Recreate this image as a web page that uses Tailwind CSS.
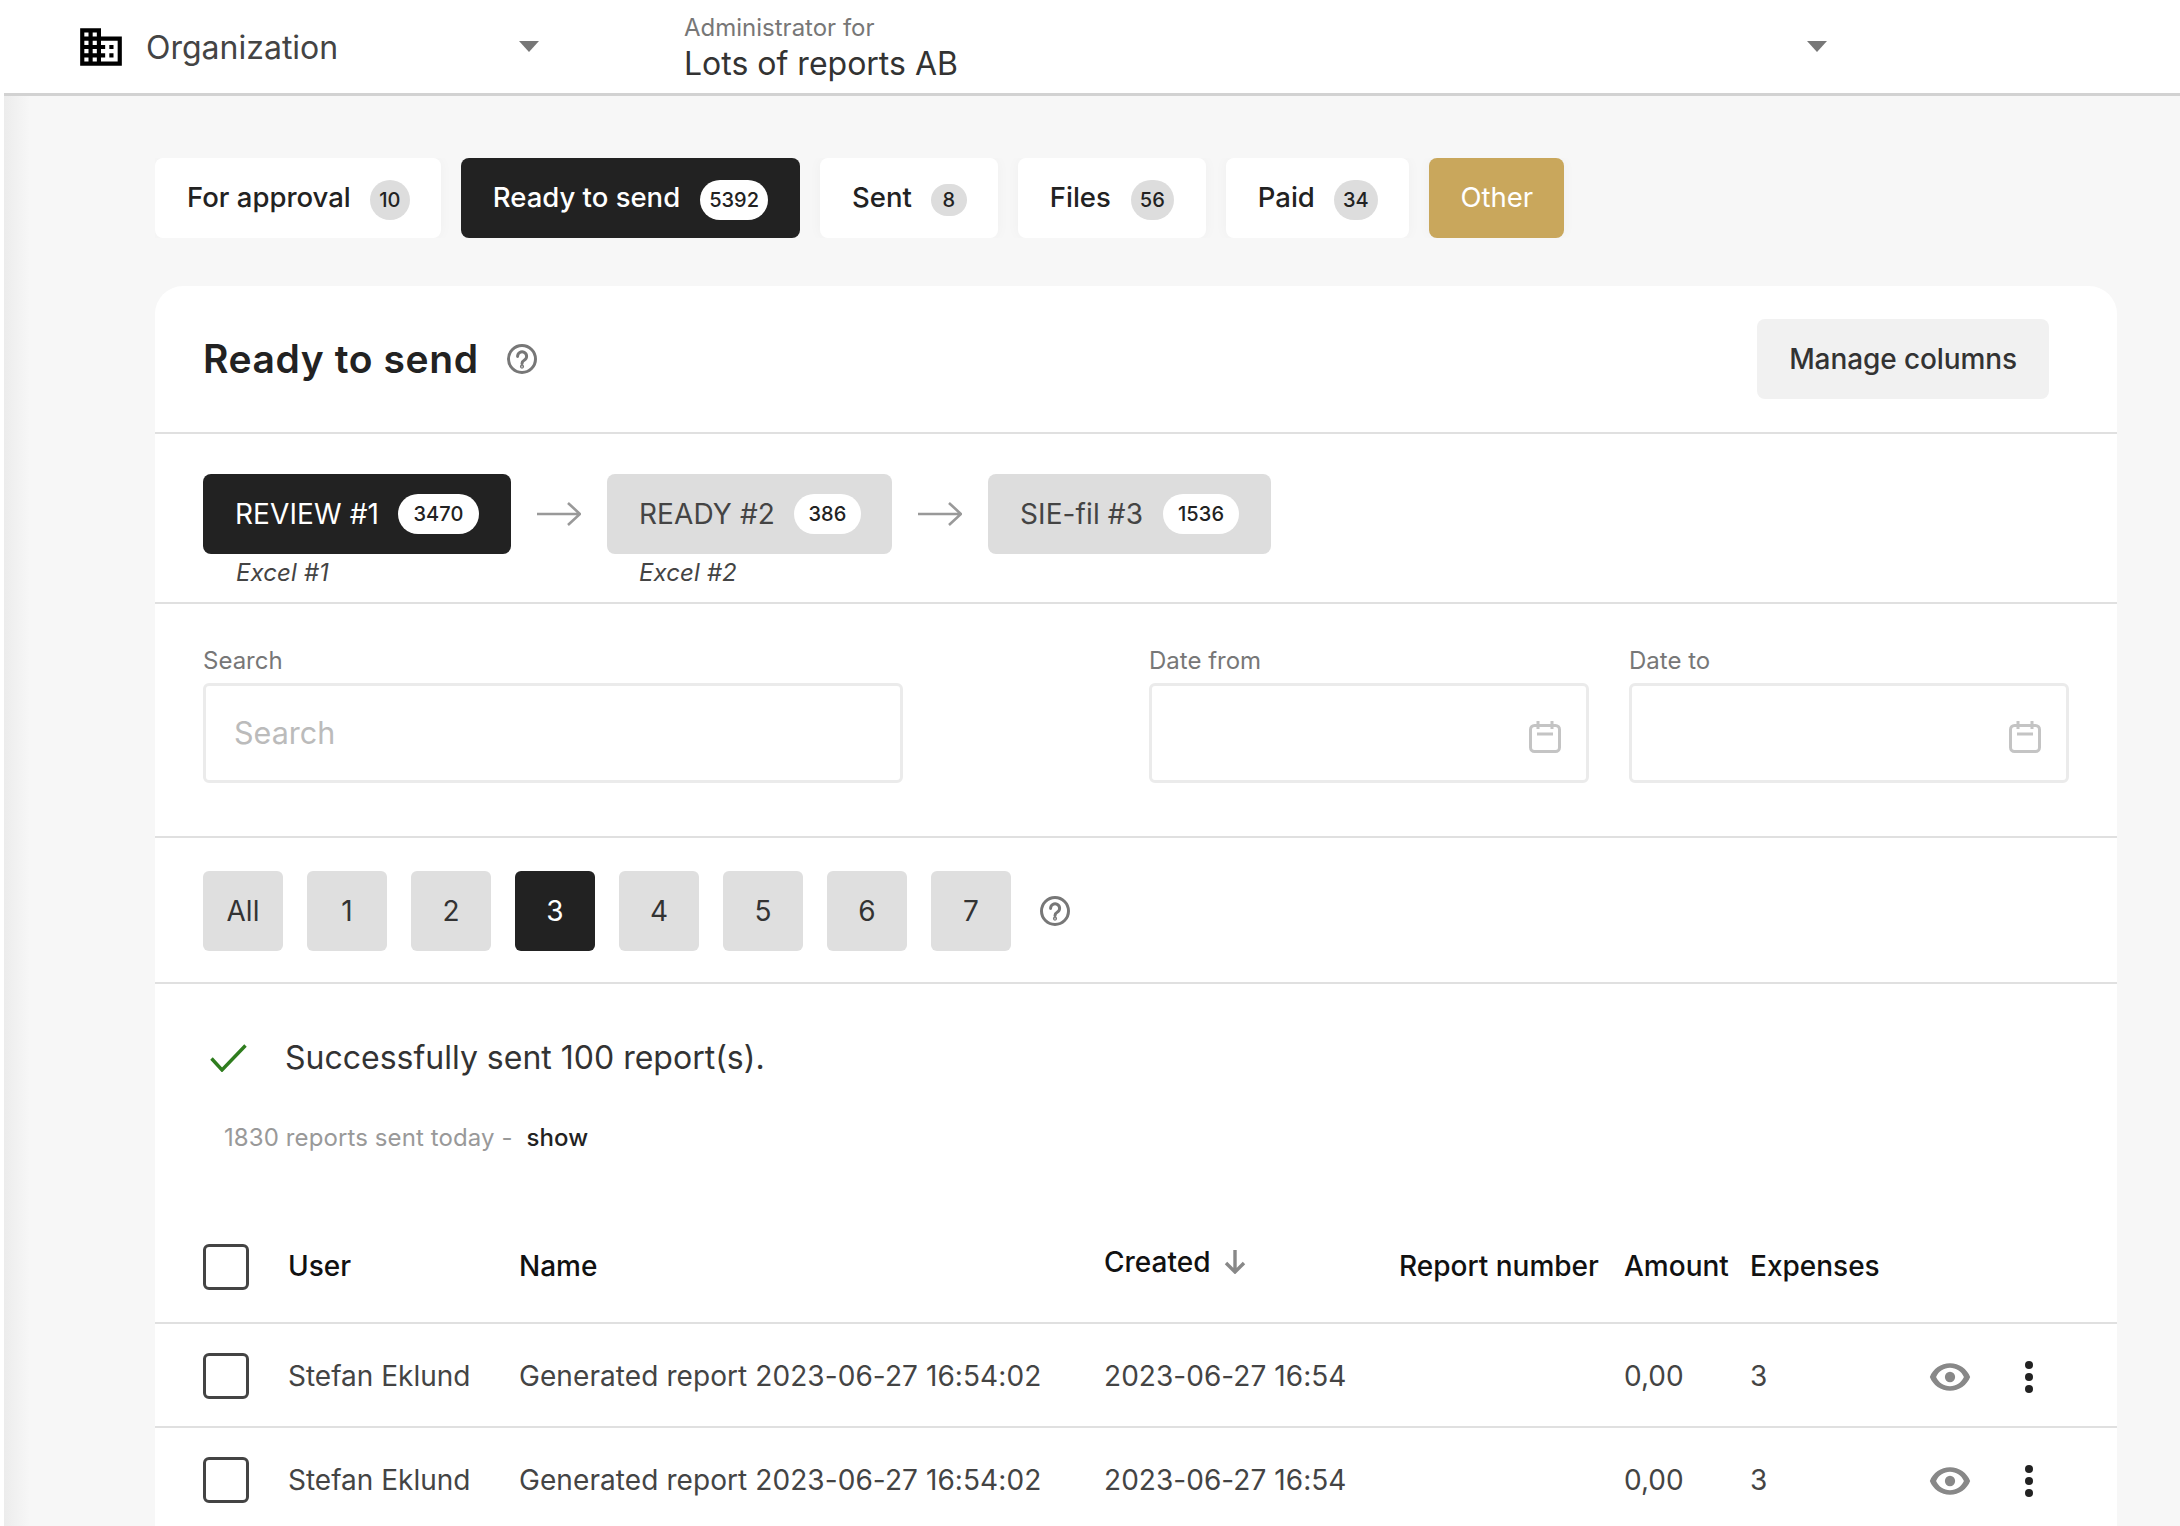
<!doctype html>
<html lang="en">
<head>
<meta charset="utf-8">
<title>Ready to send</title>
<script src="https://cdn.jsdelivr.net/npm/@tailwindcss/browser@4"></script>
</head>
<body class="m-0 bg-white">
<div class="w-[2180px] h-[1526px] overflow-hidden flex font-['Inter','Liberation_Sans',sans-serif] text-[28px] text-[#222]">
  <div class="w-[4px] shrink-0 bg-white"></div>
  <div class="w-[2176px] shrink-0 bg-[linear-gradient(90deg,#ececec,#f7f7f7_26px)]">
    <header class="h-[96px] bg-white border-b-[3px] border-[#d2d2d2] flex items-start">
      <div class="w-[463px] ml-[72px] h-[93px] flex items-center">
        <svg class="w-[50px] h-[50px] text-black" viewBox="0 0 24 24" fill="currentColor" aria-hidden="true"><path d="M12 7V3H2v18h20V7H12zM6 19H4v-2h2v2zm0-4H4v-2h2v2zm0-4H4V9h2v2zm0-4H4V5h2v2zm4 12H8v-2h2v2zm0-4H8v-2h2v2zm0-4H8V9h2v2zm0-4H8V5h2v2zm10 12h-8v-2h2v-2h-2v-2h2v-2h-2V9h8v10zm-2-8h-2v2h2v-2zm0 4h-2v2h2v-2z"/></svg>
        <span class="ml-[20px] mt-[3px] text-[32px] text-[#444] flex-1">Organization</span>
        <span class="w-0 h-0 border-x-[10px] border-x-transparent border-t-[11px] border-t-[#777]"></span>
      </div>
      <div class="w-[1143px] ml-[145px] h-[93px] flex items-center justify-between">
        <div class="flex flex-col pt-[3px]">
          <span class="text-[24px] leading-[30px] text-[#777]">Administrator for</span>
          <span class="text-[32px] leading-[40px] mt-[1px] text-[#333]">Lots of reports AB</span>
        </div>
        <span class="w-0 h-0 border-x-[10px] border-x-transparent border-t-[11px] border-t-[#777]"></span>
      </div>
    </header>

    <main class="pl-[151px]">
      <nav class="mt-[62px] h-[80px] w-[1450px] flex gap-[20px] overflow-hidden font-medium text-[27.5px]">
        <a class="h-[80px] rounded-[8px] bg-white shadow-[0_0_14px_rgba(0,0,0,0.035)] pl-[32px] pr-[31px] flex items-center gap-[19px]">For approval <span class="h-[40px] px-[9px] min-w-[40px] mt-[3px] rounded-full bg-[#ddd] flex items-center justify-center text-[20px]">10</span></a>
        <a class="h-[80px] rounded-[8px] bg-[#222] text-white pl-[32px] pr-[32px] flex items-center gap-[20px]">Ready to send <span class="h-[40px] px-[9px] mt-[3px] rounded-full bg-white text-[#222] flex items-center justify-center text-[20px]">5392</span></a>
        <a class="h-[80px] rounded-[8px] bg-white shadow-[0_0_14px_rgba(0,0,0,0.035)] pl-[32px] pr-[31px] flex items-center gap-[19px]">Sent <span class="h-[32px] w-[36px] mt-[3px] rounded-full bg-[#ddd] flex items-center justify-center text-[20px]">8</span></a>
        <a class="h-[80px] rounded-[8px] bg-white shadow-[0_0_14px_rgba(0,0,0,0.035)] pl-[32px] pr-[32px] flex items-center gap-[20px]">Files <span class="h-[40px] px-[9px] mt-[3px] rounded-full bg-[#ddd] flex items-center justify-center text-[20px]">56</span></a>
        <a class="h-[80px] rounded-[8px] bg-white shadow-[0_0_14px_rgba(0,0,0,0.035)] pl-[32px] pr-[31px] flex items-center gap-[19px]">Paid <span class="h-[40px] px-[9px] mt-[3px] rounded-full bg-[#ddd] flex items-center justify-center text-[20px]">34</span></a>
        <a class="h-[80px] rounded-[8px] bg-[#c9a75c] text-white pl-[32px] pr-[31px] shadow-[0_0_14px_rgba(0,0,0,0.035)] flex items-center font-normal">Other</a>
      </nav>

      <section class="mt-[48px] w-[1962px] bg-white rounded-t-[28px]">
        <div class="h-[148px] border-b-[2px] border-[#e0e0e0] pl-[48px] pr-[68px] flex items-center justify-between">
          <div class="flex items-center gap-[28px]">
            <h1 class="text-[39px] font-semibold m-0 tracking-[0.6px]">Ready to send</h1>
            <svg class="w-[30px] h-[30px] text-[#777]" viewBox="0 0 30 30" fill="none" stroke="currentColor" stroke-width="3" stroke-linecap="round" aria-hidden="true"><circle cx="15" cy="15" r="13.5"/><path d="M10.6 12.4a4.5 4.5 0 1 1 6.9 3.7c-1.6 1-2.5 1.8-2.5 3.3"/><circle cx="15" cy="22.6" r="0.6" fill="currentColor"/></svg>
          </div>
          <button class="h-[80px] px-[32px] rounded-[8px] bg-[#f1f1f1] font-medium text-[#333] tracking-[-0.1px]">Manage columns</button>
        </div>

        <div class="h-[170px] border-b-[2px] border-[#e0e0e0] pl-[48px] pt-[40px] flex items-start tracking-[0.1px]">
          <div class="flex flex-col">
            <div class="h-[80px] w-[308px] rounded-[8px] bg-[#222] text-white pl-[32px] flex items-center gap-[19px]"><span>REVIEW #1</span><span class="h-[40px] w-[81px] rounded-full bg-white text-[#222] flex items-center justify-center text-[20px] font-medium">3470</span></div>
            <i class="pl-[33px] mt-[4px] text-[24px] leading-[30px] text-[#444]">Excel #1</i>
          </div>
          <svg class="w-[44px] h-[24px] mx-[26px] mt-[28px] text-[#999]" viewBox="0 0 44 24" fill="none" stroke="currentColor" stroke-width="2.6" aria-hidden="true"><path d="M0 12H43M31 1l12 11-12 11"/></svg>
          <div class="flex flex-col">
            <div class="h-[80px] w-[285px] rounded-[8px] bg-[#ddd] text-[#444] pl-[32px] flex items-center gap-[19px]"><span>READY #2</span><span class="h-[40px] w-[67px] rounded-full bg-white text-[#222] flex items-center justify-center text-[20px] font-medium">386</span></div>
            <i class="pl-[32px] mt-[4px] text-[24px] leading-[30px] text-[#444]">Excel #2</i>
          </div>
          <svg class="w-[44px] h-[24px] mx-[26px] mt-[28px] text-[#999]" viewBox="0 0 44 24" fill="none" stroke="currentColor" stroke-width="2.6" aria-hidden="true"><path d="M0 12H43M31 1l12 11-12 11"/></svg>
          <div class="h-[80px] w-[283px] rounded-[8px] bg-[#ddd] text-[#444] pl-[32px] flex items-center gap-[20px]"><span>SIE-fil #3</span><span class="h-[40px] w-[76px] rounded-full bg-white text-[#222] flex items-center justify-center text-[20px] font-medium">1536</span></div>
        </div>

        <div class="h-[234px] border-b-[2px] border-[#e0e0e0] pl-[48px] pt-[42px] flex items-start">
          <label class="flex flex-col w-[700px]">
            <span class="text-[24px] leading-[30px] text-[#777]">Search</span>
            <span class="mt-[7px] h-[100px] rounded-[6px] border-[3px] border-[#ebebeb] pl-[28px] flex items-center text-[#bbb] text-[30.5px]">Search</span>
          </label>
          <label class="flex flex-col ml-[246px] w-[440px]">
            <span class="text-[24px] leading-[30px] text-[#777]">Date from</span>
            <span class="mt-[7px] h-[100px] rounded-[6px] border-[3px] border-[#ebebeb] pr-[25px] flex items-center justify-end">
              <svg class="w-[32px] h-[32px] mt-[8px] text-[#c4c4c4]" viewBox="0 0 32 32" fill="none" stroke="currentColor" stroke-width="3" aria-hidden="true"><rect x="1.5" y="4.5" width="29" height="26" rx="4"/><path d="M9 0v8M23 0v8M8 13h16"/></svg>
            </span>
          </label>
          <label class="flex flex-col ml-[40px] w-[440px]">
            <span class="text-[24px] leading-[30px] text-[#777]">Date to</span>
            <span class="mt-[7px] h-[100px] rounded-[6px] border-[3px] border-[#ebebeb] pr-[25px] flex items-center justify-end">
              <svg class="w-[32px] h-[32px] mt-[8px] text-[#c4c4c4]" viewBox="0 0 32 32" fill="none" stroke="currentColor" stroke-width="3" aria-hidden="true"><rect x="1.5" y="4.5" width="29" height="26" rx="4"/><path d="M9 0v8M23 0v8M8 13h16"/></svg>
            </span>
          </label>
        </div>

        <div class="h-[146px] border-b-[2px] border-[#e0e0e0] pl-[48px] pt-[2px] flex items-center gap-[24px]">
          <button class="w-[80px] h-[80px] rounded-[6px] bg-[#dfdfdf] text-[#333]">All</button>
          <button class="w-[80px] h-[80px] rounded-[6px] bg-[#dfdfdf] text-[#333]">1</button>
          <button class="w-[80px] h-[80px] rounded-[6px] bg-[#dfdfdf] text-[#333]">2</button>
          <button class="w-[80px] h-[80px] rounded-[6px] bg-[#222] text-white">3</button>
          <button class="w-[80px] h-[80px] rounded-[6px] bg-[#dfdfdf] text-[#333]">4</button>
          <button class="w-[80px] h-[80px] rounded-[6px] bg-[#dfdfdf] text-[#333]">5</button>
          <button class="w-[80px] h-[80px] rounded-[6px] bg-[#dfdfdf] text-[#333]">6</button>
          <button class="w-[80px] h-[80px] rounded-[6px] bg-[#dfdfdf] text-[#333]">7</button>
          <svg class="w-[30px] h-[30px] ml-[5px] text-[#777]" viewBox="0 0 30 30" fill="none" stroke="currentColor" stroke-width="3" stroke-linecap="round" aria-hidden="true"><circle cx="15" cy="15" r="13.5"/><path d="M10.6 12.4a4.5 4.5 0 1 1 6.9 3.7c-1.6 1-2.5 1.8-2.5 3.3"/><circle cx="15" cy="22.6" r="0.6" fill="currentColor"/></svg>
        </div>

        <div class="h-[228px] flex flex-col">
          <div class="pl-[55px] pt-[58px] flex items-center gap-[38px]">
            <svg class="w-[37px] h-[28px] text-[#2f7d1e]" viewBox="0 0 37 28" fill="none" stroke="currentColor" stroke-width="3.4" aria-hidden="true"><path d="M1.5 14.5 12 26 35.5 1.5"/></svg>
            <span class="text-[32px] leading-[32px] text-[#333]">Successfully sent 100 report(s).</span>
          </div>
          <div class="pl-[69px] mt-[49px] text-[24px] leading-[30px] tracking-[0.1px] flex items-center text-[#999]">1830 reports sent today -<span class="ml-[14px] text-[#222] font-medium">show</span></div>
        </div>

        <div class="h-[112px] pb-[2px] border-b-[2px] border-[#e0e0e0] pl-[48px] grid grid-cols-[85px_231px_585px_295px_225px_126px_178px] items-center font-medium text-[#111]">
          <span class="w-[46px] h-[46px] mt-[2px] rounded-[6px] border-[3px] border-[#444]"></span>
          <span>User</span>
          <span>Name</span>
          <span class="flex items-center gap-[14px] mt-[-8px]">Created
            <svg class="w-[22px] h-[24px] text-[#888]" viewBox="0 0 22 24" fill="none" stroke="currentColor" stroke-width="3.4" aria-hidden="true"><path d="M11 0v22M2 13l9 9 9-9"/></svg>
          </span>
          <span>Report number</span>
          <span>Amount</span>
          <span>Expenses</span>
        </div>

        <div class="h-[104px] pt-[1px] border-b-[2px] border-[#e0e0e0] pl-[48px] grid grid-cols-[85px_231px_585px_295px_225px_126px_178px_97px_auto] items-center text-[#444]">
          <span class="w-[46px] h-[46px] rounded-[6px] border-[3px] border-[#444]"></span>
          <span>Stefan Eklund</span>
          <span class="tracking-[0.08px]">Generated report 2023-06-27 16:54:02</span>
          <span class="tracking-[0.05px]">2023-06-27 16:54</span>
          <span></span>
          <span>0,00</span>
          <span>3</span>
          <svg class="w-[44px] h-[44px] text-[#888] mt-[3px]" viewBox="0 0 24 24" fill="currentColor" fill-rule="evenodd" aria-hidden="true"><path d="M12 4.5C7 4.5 2.73 7.61 1 12c1.73 4.39 6 7.5 11 7.5s9.27-3.11 11-7.5c-1.73-4.39-6-7.5-11-7.5zM12 7c3.3 0 6.2 1.9 7.6 5-1.4 3.1-4.3 5-7.6 5s-6.2-1.9-7.6-5C5.8 8.9 8.7 7 12 7z"/><circle cx="12" cy="12" r="2.8"/></svg>
          <svg class="w-[8px] h-[32px] text-[#222] mt-[3px]" viewBox="0 0 8 32" fill="currentColor" aria-hidden="true"><circle cx="4" cy="4" r="4"/><circle cx="4" cy="16" r="4"/><circle cx="4" cy="28" r="4"/></svg>
        </div>

        <div class="h-[104px] pt-[1px] border-b-[2px] border-[#e0e0e0] pl-[48px] grid grid-cols-[85px_231px_585px_295px_225px_126px_178px_97px_auto] items-center text-[#444]">
          <span class="w-[46px] h-[46px] rounded-[6px] border-[3px] border-[#444]"></span>
          <span>Stefan Eklund</span>
          <span class="tracking-[0.08px]">Generated report 2023-06-27 16:54:02</span>
          <span class="tracking-[0.05px]">2023-06-27 16:54</span>
          <span></span>
          <span>0,00</span>
          <span>3</span>
          <svg class="w-[44px] h-[44px] text-[#888] mt-[3px]" viewBox="0 0 24 24" fill="currentColor" fill-rule="evenodd" aria-hidden="true"><path d="M12 4.5C7 4.5 2.73 7.61 1 12c1.73 4.39 6 7.5 11 7.5s9.27-3.11 11-7.5c-1.73-4.39-6-7.5-11-7.5zM12 7c3.3 0 6.2 1.9 7.6 5-1.4 3.1-4.3 5-7.6 5s-6.2-1.9-7.6-5C5.8 8.9 8.7 7 12 7z"/><circle cx="12" cy="12" r="2.8"/></svg>
          <svg class="w-[8px] h-[32px] text-[#222] mt-[3px]" viewBox="0 0 8 32" fill="currentColor" aria-hidden="true"><circle cx="4" cy="4" r="4"/><circle cx="4" cy="16" r="4"/><circle cx="4" cy="28" r="4"/></svg>
        </div>
      </section>
    </main>
  </div>
</div>
</body>
</html>
